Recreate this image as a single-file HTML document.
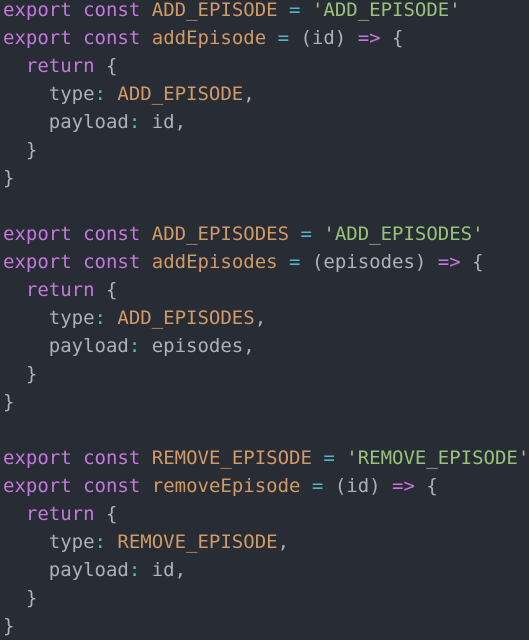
<html><head><style>
body{margin:0;background:#282c34;width:529px;height:639px;overflow:hidden}
pre{margin:0;position:absolute;top:-4px;left:3px;font-family:"DejaVu Sans Mono","Liberation Mono",monospace;font-size:19px;line-height:28px;color:#abb2bf}
.k{color:#c678dd}.o{color:#d19a66}.s{color:#98c379}.c{color:#56b6c2}
</style></head><body><pre><span class="k">export</span> <span class="k">const</span> <span class="o">ADD_EPISODE</span> <span class="c">=</span> <span class="s">'ADD_EPISODE'</span>
<span class="k">export</span> <span class="k">const</span> <span class="o">addEpisode</span> <span class="c">=</span> (id) <span class="k">=&gt;</span> {
  <span class="k">return</span> {
    type<span class="c">:</span> <span class="o">ADD_EPISODE</span>,
    payload<span class="c">:</span> id,
  }
}

<span class="k">export</span> <span class="k">const</span> <span class="o">ADD_EPISODES</span> <span class="c">=</span> <span class="s">'ADD_EPISODES'</span>
<span class="k">export</span> <span class="k">const</span> <span class="o">addEpisodes</span> <span class="c">=</span> (episodes) <span class="k">=&gt;</span> {
  <span class="k">return</span> {
    type<span class="c">:</span> <span class="o">ADD_EPISODES</span>,
    payload<span class="c">:</span> episodes,
  }
}

<span class="k">export</span> <span class="k">const</span> <span class="o">REMOVE_EPISODE</span> <span class="c">=</span> <span class="s">'REMOVE_EPISODE'</span>
<span class="k">export</span> <span class="k">const</span> <span class="o">removeEpisode</span> <span class="c">=</span> (id) <span class="k">=&gt;</span> {
  <span class="k">return</span> {
    type<span class="c">:</span> <span class="o">REMOVE_EPISODE</span>,
    payload<span class="c">:</span> id,
  }
}</pre></body></html>
